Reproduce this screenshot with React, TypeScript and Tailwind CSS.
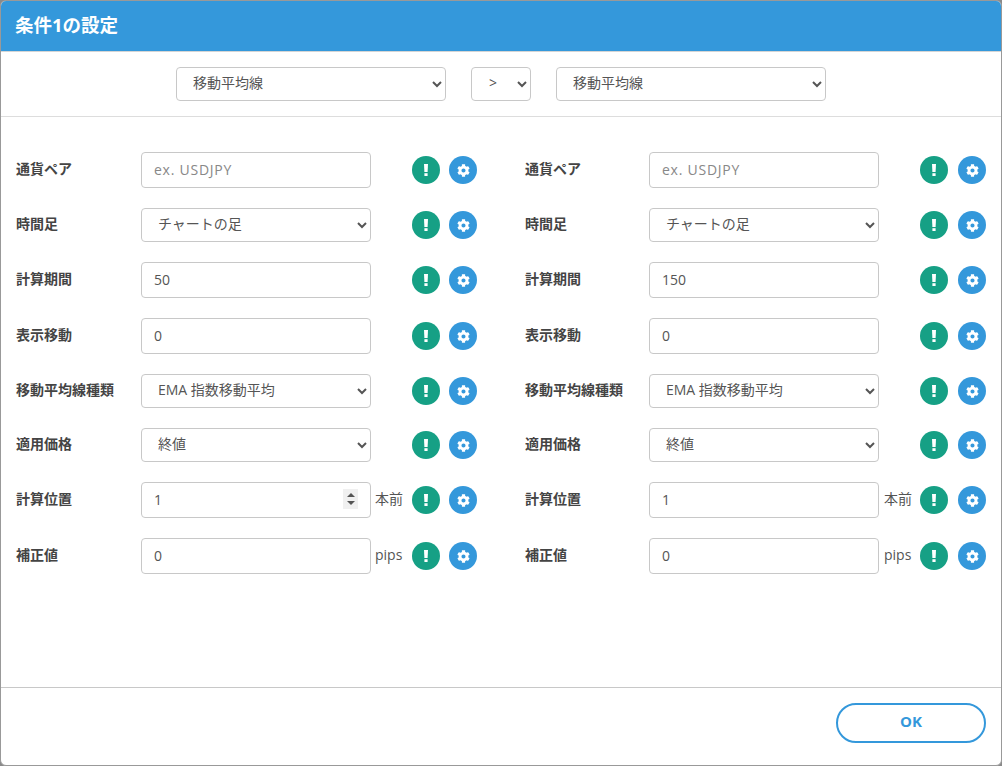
import { FaCog } from "react-icons/fa";

const inputClass =
  "h-9 w-[230px] rounded border border-[#c8c8c8] bg-white px-3 pb-[2px] text-sm text-[#555] placeholder:text-[#888] placeholder:tracking-[0.75px] outline-none";
const selectClass =
  "h-[34px] rounded border border-[#c8c8c8] bg-white pb-1 text-sm text-[#555] outline-none";

type Row = {
  label: string;
  kind: "input" | "select";
  value?: string;
  placeholder?: string;
  unit?: string;
  spinner?: boolean;
};

const leftRows: Row[] = [
  { label: "通貨ペア", kind: "input", placeholder: "ex. USDJPY" },
  { label: "時間足", kind: "select", value: "チャートの足" },
  { label: "計算期間", kind: "input", value: "50" },
  { label: "表示移動", kind: "input", value: "0" },
  { label: "移動平均線種類", kind: "select", value: "EMA 指数移動平均" },
  { label: "適用価格", kind: "select", value: "終値" },
  { label: "計算位置", kind: "input", value: "1", unit: "本前", spinner: true },
  { label: "補正値", kind: "input", value: "0", unit: "pips" },
];

const rightRows: Row[] = leftRows.map((r) => ({
  ...r,
  value: r.label === "計算期間" ? "150" : r.value,
  spinner: false,
}));

const IconButtons = ({ right }: { right?: boolean }) => (
  <div className={`flex items-center ${right ? "gap-[10px]" : "gap-[9px]"}`}>
    <span className="flex h-7 w-7 items-center justify-center rounded-full bg-[#16a085] pb-px text-white">
      <svg width="4" height="12" viewBox="0 0 4 12" fill="currentColor">
        <path d="M0 0h4l-.4 8H.4z" />
        <rect x="0.4" y="9.2" width="3.2" height="2.8" />
      </svg>
    </span>
    <span className="flex h-7 w-7 items-center justify-center rounded-full bg-[#3498db] text-white">
      <FaCog size={13} />
    </span>
  </div>
);

const FormRow = ({ row, right }: { row: Row; right?: boolean }) => (
  <div className="flex items-center">
    <label className={`pb-[2px] text-sm font-bold text-[#444] ${right ? "w-[124px]" : "w-[125px]"}`}>
      {row.label}
    </label>
    {row.kind === "input" ? (
      <div className="relative">
        <input
          type="text"
          defaultValue={row.value}
          placeholder={row.placeholder}
          className={inputClass}
        />
        {row.spinner && (
          <span className="absolute right-[13px] top-[7px] flex h-5 w-[15px] flex-col items-center justify-center gap-[4px] bg-[#f0f0f0]">
            <span className="h-0 w-0 border-x-[4px] border-b-[4px] border-x-transparent border-b-[#555]" />
            <span className="h-0 w-0 border-x-[4px] border-t-[4px] border-x-transparent border-t-[#555]" />
          </span>
        )}
      </div>
    ) : (
      <select className={`${selectClass} w-[230px] pl-3`} defaultValue={row.value}>
        <option>{row.value}</option>
      </select>
    )}
    <span className={`pb-[2px] text-sm text-[#555] ${right ? "w-[41px] pl-[5px]" : "w-[41px] pl-1"}`}>
      {row.unit}
    </span>
    <IconButtons right={right} />
  </div>
);

export default function App() {
  return (
    <div className="h-[766px] w-[1002px] bg-[#8a8a8a] font-['Open_Sans','Noto_Sans_CJK_JP',sans-serif]">
      <div className="flex h-full flex-col overflow-hidden rounded-md border border-[#999] bg-white">
        <div className="flex h-[51px] shrink-0 items-center border-b border-[#d5d5d5] bg-[#3498db] px-[14px]">
          <h1 className="pb-[2px] text-[18.5px] font-bold text-white">条件1の設定</h1>
        </div>

        <div className="flex h-[65px] shrink-0 items-center justify-center gap-[25px] border-b border-[#ddd]">
          <select className={`${selectClass} w-[270px] pl-3`}>
            <option>移動平均線</option>
          </select>
          <select className={`${selectClass} w-[60px] pl-[13px]`}>
            <option>&gt;</option>
          </select>
          <select className={`${selectClass} w-[270px] pl-3`}>
            <option>移動平均線</option>
          </select>
        </div>

        <div className="flex flex-1 gap-[48px] pl-[15px] pt-[35px]">
          <div className="flex flex-col gap-5">
            {leftRows.map((row) => (
              <FormRow key={row.label} row={row} />
            ))}
          </div>
          <div className="flex flex-col gap-5">
            {rightRows.map((row) => (
              <FormRow key={row.label} row={row} right />
            ))}
          </div>
        </div>

        <div className="flex h-[78px] shrink-0 items-start justify-end border-t border-[#c8c8c8] pr-[15px] pt-[15px]">
          <button className="h-10 w-[150px] rounded-full border-2 border-[#3498db] bg-white pb-[3px] text-[15px] font-bold text-[#3498db]">
            OK
          </button>
        </div>
      </div>
    </div>
  );
}
